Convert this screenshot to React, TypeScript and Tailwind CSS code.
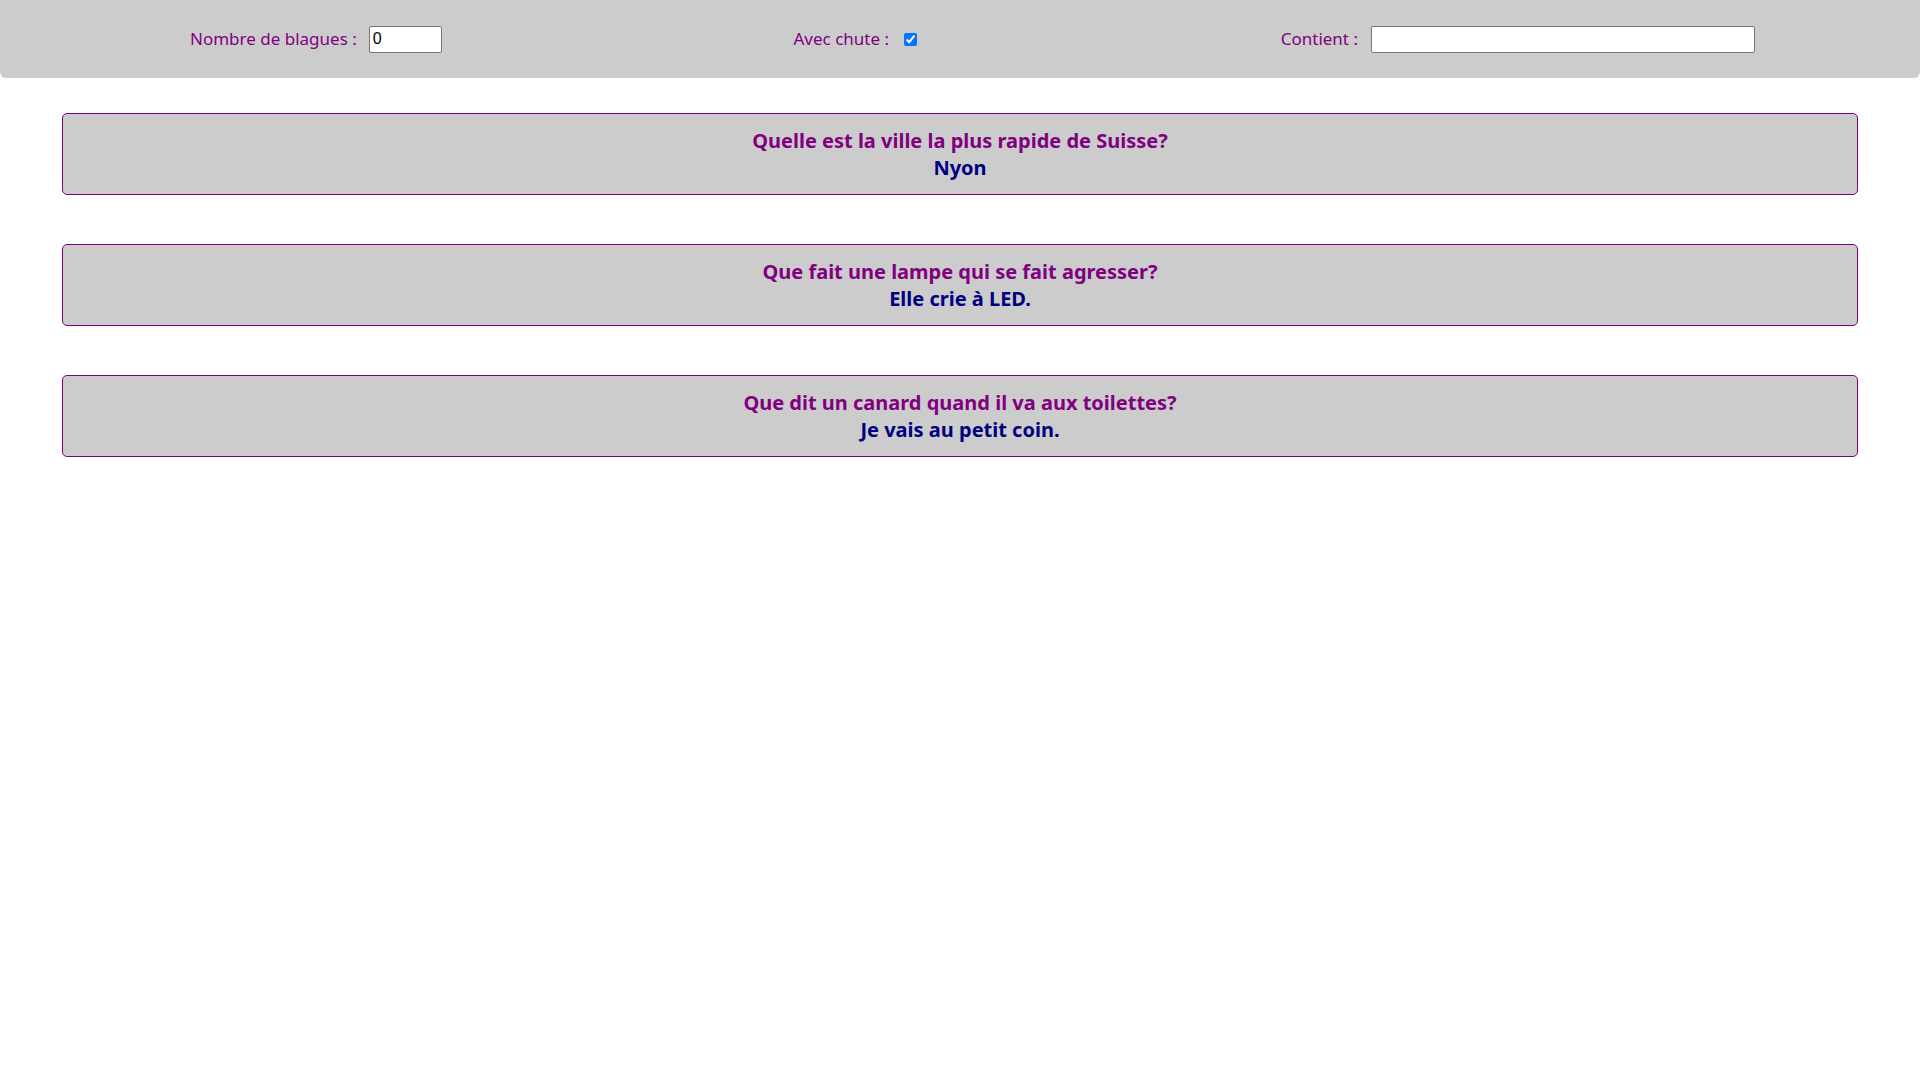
import { useState } from "react";

const blagues = [
  {
    id: 1,
    question: "Quelle est la ville la plus rapide de Suisse?",
    chute: "Nyon",
  },
  {
    id: 2,
    question: "Que fait une lampe qui se fait agresser?",
    chute: "Elle crie à LED.",
  },
  {
    id: 3,
    question: "Que dit un canard quand il va aux toilettes?",
    chute: "Je vais au petit coin.",
  },
];

export default function App() {
  const [nombre, setNombre] = useState("0");
  const [avecChute, setAvecChute] = useState(true);
  const [contient, setContient] = useState("");

  const filtrees = blagues.filter((b) =>
    (b.question + " " + b.chute).toLowerCase().includes(contient.toLowerCase())
  );

  return (
    <div className="min-h-screen bg-white font-['Noto_Sans',sans-serif]">
      {/* Barre de filtres */}
      <div className="h-[78px] bg-[#cccccc] rounded-b-md flex items-center justify-between pl-[190px] pr-[165px] text-[17px] text-[#800080]">
        <div className="flex items-center">
          <label htmlFor="nombre">Nombre de blagues :</label>
          <input
            id="nombre"
            type="text"
            value={nombre}
            onChange={(e) => setNombre(e.target.value)}
            className="ml-[12px] w-[73px] h-[27px] bg-white border border-[#767676] rounded-[2px] px-[3px] text-[16px] text-black font-['Liberation_Sans',sans-serif] outline-none"
          />
        </div>
        <div className="flex items-center mr-[12px]">
          <label htmlFor="chute">Avec chute :</label>
          <input
            id="chute"
            type="checkbox"
            checked={avecChute}
            onChange={(e) => setAvecChute(e.target.checked)}
            className="ml-[15px] w-[13px] h-[13px] accent-[#0075ff]"
          />
        </div>
        <div className="flex items-center">
          <label htmlFor="contient">Contient :</label>
          <input
            id="contient"
            type="text"
            value={contient}
            onChange={(e) => setContient(e.target.value)}
            className="ml-[13px] w-[384px] h-[27px] bg-white border border-[#767676] rounded-[2px] px-[3px] text-[16px] text-black font-['Liberation_Sans',sans-serif] outline-none"
          />
        </div>
      </div>

      {/* Liste des blagues */}
      <div className="px-[62px] pt-[35px] flex flex-col gap-[49px]">
        {filtrees.map((b) => (
          <div
            key={b.id}
            className="h-[82px] bg-[#cccccc] border border-[#800080] rounded-[5px] flex flex-col items-center justify-center text-[20px] font-bold leading-[27px]"
          >
            <div className="text-[#800080]">{b.question}</div>
            {avecChute && <div className="text-[#000080]">{b.chute}</div>}
          </div>
        ))}
      </div>
    </div>
  );
}
